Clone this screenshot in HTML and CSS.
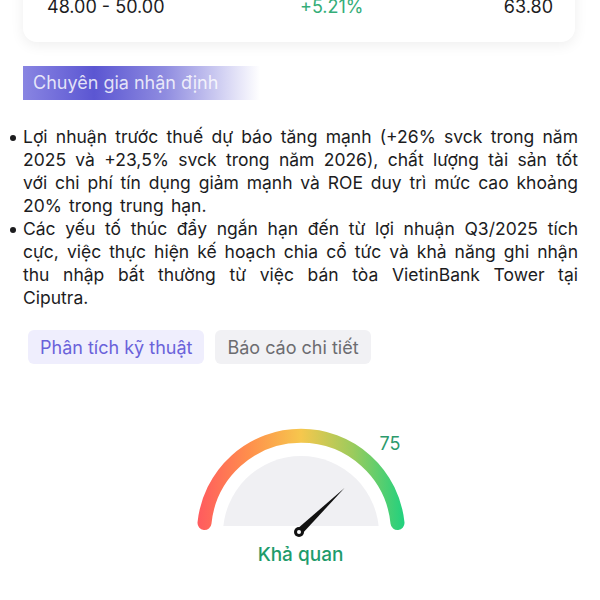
FILE: index.html
```html
<!DOCTYPE html>
<html lang="vi">
<head>
    <meta charset="UTF-8">
    <meta name="viewport" content="width=device-width, initial-scale=1.0">
    <title>Chuyên gia nhận định</title>
    <link rel="stylesheet" href="styles.css">
</head>
<body>

<div class="page">
    <div class="price-card">
        <div class="price-row">
            <span>48.00 - 50.00</span>
            <span class="up">+5.21%</span>
            <span class="target">63.80</span>
        </div>
    </div>

    <div class="section-title">Chuyên gia nhận định</div>

    <ul class="opinion">
        <li>Lợi nhuận trước thuế dự báo tăng mạnh (+26% svck trong năm 2025 và +23,5% svck trong năm 2026), chất lượng tài sản tốt với chi phí tín dụng giảm mạnh và ROE duy trì mức cao khoảng 20% trong trung hạn.</li>
        <li>Các yếu tố thúc đẩy ngắn hạn đến từ lợi nhuận Q3/2025 tích cực, việc thực hiện kế hoạch chia cổ tức và khả năng ghi nhận thu nhập bất thường từ việc bán tòa VietinBank Tower tại Ciputra.</li>
    </ul>

    <div class="tabs">
        <button class="tab active">Phân tích kỹ thuật</button>
        <button class="tab">Báo cáo chi tiết</button>
    </div>

    <div class="gauge">
        <svg width="240" height="130" viewBox="180 420 240 130">
            <defs>
                <linearGradient id="arcColor" x1="196" y1="0" x2="404" y2="0" gradientUnits="userSpaceOnUse">
                    <stop offset="0" stop-color="#ff5a5f"/>
                    <stop offset="0.25" stop-color="#ff8f4c"/>
                    <stop offset="0.5" stop-color="#f6c74d"/>
                    <stop offset="0.75" stop-color="#9bcb5d"/>
                    <stop offset="1" stop-color="#1fd17f"/>
                </linearGradient>
                <clipPath id="faceClip">
                    <rect x="180" y="420" width="240" height="107"/>
                </clipPath>
            </defs>
            <circle cx="300" cy="535" r="78" fill="#f0f0f3" clip-path="url(#faceClip)"/>
            <path d="M 203.5 524 A 97 97 0 0 1 396.5 524" fill="none" stroke="url(#arcColor)" stroke-width="14" stroke-linecap="round"/>
            <!-- needle at 75 -->
            <path d="M 295.5 530.5 L 343.5 489 L 300.5 535.5 Z" fill="#111"/>
            <circle cx="298" cy="533" r="5" fill="#111"/>
            <circle cx="298" cy="533" r="2" fill="#fff"/>
            <text x="389" y="451" class="gauge-value" text-anchor="middle">75</text>
        </svg>
        <div class="gauge-label">Khả quan</div>
    </div>
</div>

</body>
</html>
```

FILE: styles.css
```css
body {
    margin: 0;
    background-color: #fff;
    font-family: Inter, "Noto Sans", sans-serif;
    color: #1c1c1e;
}
.page {
    padding: 0 22px 0 23px;
}
.price-card {
    margin-top: -34px;
    margin-right: 3px;
    background-color: #fff;
    border-radius: 14px;
    box-shadow: 0 3px 14px rgba(0, 0, 0, 0.07);
    padding: 30px 22px 24px 24px;
}
.price-row {
    display: grid;
    grid-template-columns: 50% 1fr auto;
    font-size: 18px;
    line-height: 22px;
}
.up {
    color: #34ad78;
}
.section-title {
    margin-top: 24px;
    width: 237px;
    height: 34px;
    padding-left: 10px;
    box-sizing: border-box;
    line-height: 34px;
    font-size: 18px;
    color: rgba(255, 255, 255, 0.82);
    background: linear-gradient(90deg, #8985e2 0%, #5b56d2 30%, #8f8ce0 60%, rgba(255, 255, 255, 0) 100%);
}
.opinion {
    margin: 25px 0 0;
    padding: 0;
    list-style: none;
    font-size: 17.5px;
    line-height: 23px;
    word-spacing: 2.3px;
    text-align: justify;
}
.opinion li {
    position: relative;
}
.opinion li::before {
    content: "";
    position: absolute;
    left: -13px;
    top: 10px;
    width: 6px;
    height: 6px;
    border-radius: 50%;
    background-color: #1c1c1e;
}
.tabs {
    display: flex;
    gap: 11px;
    margin-top: 21px;
    padding-left: 5px;
}
.tab {
    border: none;
    border-radius: 6px;
    height: 34px;
    padding: 0 12px;
    font-family: inherit;
    font-size: 18px;
    background-color: #f1f1f4;
    color: #6c6c70;
}
.tab.active {
    background-color: #efeefd;
    color: #6a62da;
}
.gauge {
    margin-top: 55px;
    display: flex;
    flex-direction: column;
    align-items: center;
}
.gauge svg {
    display: block;
}
.gauge-value {
    font-family: Inter, sans-serif;
    font-size: 18px;
    fill: #2c9a6c;
}
.gauge-label {
    margin-top: -6px;
    font-size: 19px;
    font-weight: 500;
    color: #1e9b6b;
}
```
